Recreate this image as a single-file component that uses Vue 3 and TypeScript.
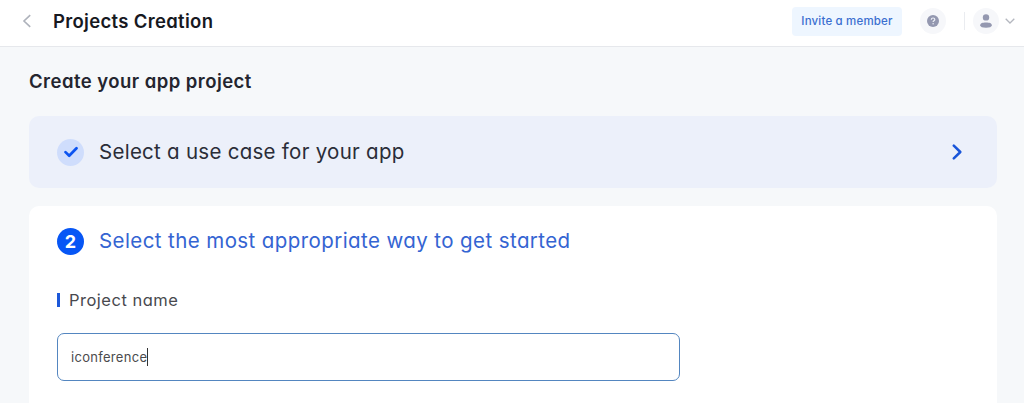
<script setup lang="ts">
import { ref } from 'vue'

const projectName = ref<string>('iconference')
</script>

<template>
  <div class="page">
    <header class="topbar">
      <svg class="back" viewBox="0 0 10 14" fill="none" stroke="#aeb2bb" stroke-width="1.6">
        <path d="M8.2 1.2 2 7l6.2 5.8" />
      </svg>
      <h1 class="title"><span>Projects Creation</span></h1>
      <button class="invite"><span>Invite a member</span></button>
      <span class="round help">
        <svg viewBox="0 0 12 12" width="12" height="12">
          <circle cx="6" cy="6" r="6" fill="#9498b0" />
          <path d="M4.3 4.7c0-2.3 3.5-2.2 3.5-.1 0 1.2-1.7 1.3-1.7 2.5" fill="none" stroke="#eceef5" stroke-width="1.2" />
          <circle cx="6.1" cy="8.8" r=".75" fill="#eceef5" />
        </svg>
      </span>
      <span class="divider"></span>
      <span class="round user">
        <svg viewBox="0 0 12 14" width="12" height="14" fill="#9498b0">
          <circle cx="6" cy="3.4" r="3.2" />
          <path d="M.2 11.2c0-2 2.4-2.700 5.800-2.700s5.800.7 5.800 2.700c0 1.700-2.400 2.500-5.800 2.500S.2 12.900.2 11.200z" />
        </svg>
      </span>
      <svg class="down" viewBox="0 0 10 6" fill="none" stroke="#b4b7bf" stroke-width="1.3">
        <path d="M.7.7 5 5 9.300.7" />
      </svg>
    </header>

    <main class="content">
      <h2 class="heading"><span>Create your app project</span></h2>

      <section class="card done">
        <span class="badge check">
          <svg viewBox="0 0 14 12" width="14" height="12" fill="none" stroke="#0b53f0" stroke-width="2.7" stroke-linecap="round" stroke-linejoin="round">
            <path d="M1.500 6.100 5.200 9.700 12.500 2.300" />
          </svg>
        </span>
        <span class="step-title use-case">Select a use case for your app</span>
        <svg class="next" viewBox="0 0 10 16" fill="none" stroke="#1955d9" stroke-width="2.5" stroke-linecap="round" stroke-linejoin="round">
          <path d="M1.800 1.700 8.300 8 1.800 14.300" />
        </svg>
      </section>

      <section class="card active">
        <div class="step">
          <span class="badge number">2</span>
          <span class="step-title current">Select the most appropriate way to get started</span>
        </div>
        <div class="label"><i class="bar"></i><span class="label-text">Project name</span></div>
        <div class="field"><span class="value">{{ projectName }}</span><i class="caret"></i></div>
      </section>
    </main>
  </div>
</template>

<style>
body {
  background: #f6f8fa;
  overflow: hidden;
}
</style>

<style scoped>
.page {
  height: 403px;
  overflow: hidden;
  background: #f6f8fa;
  font-family: Inter, "Open Sans", sans-serif;
  font-feature-settings: "cv11" 1;
  color: #2a2d38;
  white-space: nowrap;
}
.topbar {
  box-sizing: border-box;
  height: 47px;
  padding: 0 9px 4px 22px;
  display: flex;
  align-items: center;
  background: #fff;
  border-bottom: 1px solid #e6e8ec;
}
.back { width: 10px; height: 14px; }
.title {
  flex: 1;
  margin: 0 0 0 21px;
  font-size: 18.5px;
  line-height: 28px;
  font-weight: 600;
  letter-spacing: 0.32px;
  color: #17191f;
}
.invite {
  width: 110px;
  height: 29px;
  padding: 0;
  border: 0;
  border-radius: 4px;
  background: #eef6ff;
  color: #3b6fd0;
  font: 500 11.5px/29px Inter, "Open Sans", sans-serif;
  font-feature-settings: "cv11" 1;
  letter-spacing: 0.18px;
}
.round {
  width: 26px;
  height: 26px;
  border-radius: 50%;
  background: #f6f7fa;
  display: flex;
  align-items: center;
  justify-content: center;
}
.help { margin-left: 18px; }
.divider { width: 1px; height: 18px; margin: 0 8px 0 18px; background: #eaecf0; }
.down { width: 10px; height: 6px; margin-left: 6px; }
.content { padding: 0 27px 0 29px; }
.heading {
  margin: 0;
  padding: 20px 0;
  font-size: 18.5px;
  line-height: 29px;
  font-weight: 600;
  letter-spacing: 0.46px;
  color: #24252f;
}
.card { border-radius: 10px; }
.done {
  box-sizing: border-box;
  height: 72px;
  padding: 0 35px 0 28px;
  display: flex;
  align-items: center;
  background: #ecf0fa;
}
.badge {
  width: 27px;
  height: 27px;
  margin-right: 15px;
  border-radius: 50%;
  display: flex;
  align-items: center;
  justify-content: center;
}
.check { background: #cfddfc; }
.number { background: #0756f5; color: #fff; font-size: 18px; font-weight: 700; }
.step-title { font-size: 20.5px; line-height: 30px; font-weight: 400; }
.use-case { flex: 1; letter-spacing: 0.27px; }
.current { color: #3464d2; letter-spacing: 0.41px; }
.next { width: 10px; height: 16px; }
.active {
  height: 240px;
  margin-top: 18px;
  padding: 20px 28px 0;
  background: #fff;
}
.step { height: 30px; display: flex; align-items: center; }
.label { height: 24px; margin-top: 32px; display: flex; align-items: center; }
.bar { width: 3px; height: 14px; margin-right: 9px; background: #1c58d9; }
.label-text { font-size: 16.5px; line-height: 24px; font-weight: 400; letter-spacing: 0.5px; color: #48494e; }
.field {
  box-sizing: border-box;
  width: 623px;
  height: 48px;
  margin-top: 21px;
  padding-left: 13px;
  border: 1px solid #5486c0;
  border-radius: 7px;
  display: flex;
  align-items: center;
}
.value { font-size: 13px; letter-spacing: 0.3px; color: #4b4b4d; }
.caret { width: 1px; height: 18px; background: #333; }
</style>
